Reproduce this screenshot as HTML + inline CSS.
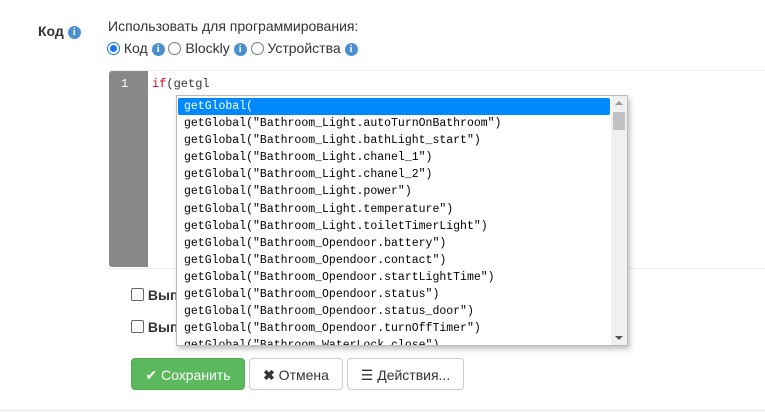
<!DOCTYPE html>
<html><head><meta charset="utf-8"><style>
body{margin:0;width:765px;height:413px;background:#fff;font-family:"Liberation Sans",sans-serif;font-size:14px;color:#333;position:relative;overflow:hidden}
.a{position:absolute}
.i{display:inline-block;width:13px;height:13px;border-radius:50%;background:#4a8fd0;color:#fff;font-size:10px;font-weight:bold;text-align:center;line-height:13px;font-family:"Liberation Serif",serif;vertical-align:1px}
.rad{display:inline-block;width:11px;height:11px;border:1px solid #777;border-radius:50%;vertical-align:-2px;background:#fff}
.mono{font-family:"Liberation Mono",monospace;font-size:11.5px}
.row{height:17.1px;line-height:17px;padding-left:6px;white-space:nowrap;color:#000}
.btn{position:absolute;top:358px;height:32px;border:1px solid #ccc;border-radius:4px;background:#fff;line-height:32px;text-align:center;font-size:14px;box-sizing:border-box}
.cb{display:inline-block;width:11px;height:11px;border:1px solid #666;border-radius:2px;vertical-align:-1px;background:#fff}
</style></head><body>
<div class="a" style="left:38px;top:23px;font-weight:bold">Код <span class="i">i</span></div>
<div class="a" style="left:108px;top:18px">Использовать для программирования:</div>
<div class="a" style="left:107px;top:40px;white-space:nowrap"><span class="rad" style="border-color:#1a73e8;background:radial-gradient(circle,#1a73e8 3px,#fff 4px)"></span> Код <span class="i">i</span> <span class="rad"></span> Blockly <span class="i">i</span> <span class="rad"></span> Устройства <span class="i">i</span></div>
<div class="a" style="left:108px;top:70px;width:660px;height:197px;border-top:1px solid #eee;border-bottom:1px solid #eee"></div>
<div class="a" style="left:109px;top:71px;width:39px;height:196px;background:#888;border-radius:3px 0 0 3px"></div>
<div class="a mono" style="left:121px;top:77px;color:#fff;font-size:12px">1</div>
<div class="a mono" style="left:152px;top:77px;font-size:12px"><span style="color:#e0002a">if</span>(getgl</div>
<div class="a" style="left:131px;top:287px;font-weight:bold"><span class="cb"></span> Вып</div>
<div class="a" style="left:131px;top:319px;font-weight:bold"><span class="cb"></span> Вып</div>
<div class="a" style="left:176px;top:95px;width:450px;height:249px;border:1px solid #bbb;background:#fff;box-shadow:2px 3px 5px rgba(0,0,0,.25);overflow:hidden">
<div class="a" style="right:0;top:0;width:16px;height:249px;background:#f0f0f0"></div>
<div class="a" style="right:2px;top:16px;width:12px;height:18px;background:#c1c1c1"></div>
<div class="a" style="right:4px;top:5px;width:0;height:0;border:4px solid transparent;border-bottom-color:#999;border-top:0"></div>
<div class="a" style="right:4px;bottom:5px;width:0;height:0;border:4px solid transparent;border-top-color:#555;border-bottom:0"></div>
<div class="mono" style="position:absolute;left:1px;top:2px;width:432px">
<div class="row" style="background:#0088ff;color:#fff;border-radius:2px">getGlobal(</div>
<div class="row">getGlobal("Bathroom_Light.autoTurnOnBathroom")</div>
<div class="row">getGlobal("Bathroom_Light.bathLight_start")</div>
<div class="row">getGlobal("Bathroom_Light.chanel_1")</div>
<div class="row">getGlobal("Bathroom_Light.chanel_2")</div>
<div class="row">getGlobal("Bathroom_Light.power")</div>
<div class="row">getGlobal("Bathroom_Light.temperature")</div>
<div class="row">getGlobal("Bathroom_Light.toiletTimerLight")</div>
<div class="row">getGlobal("Bathroom_Opendoor.battery")</div>
<div class="row">getGlobal("Bathroom_Opendoor.contact")</div>
<div class="row">getGlobal("Bathroom_Opendoor.startLightTime")</div>
<div class="row">getGlobal("Bathroom_Opendoor.status")</div>
<div class="row">getGlobal("Bathroom_Opendoor.status_door")</div>
<div class="row">getGlobal("Bathroom_Opendoor.turnOffTimer")</div>
<div class="row">getGlobal("Bathroom_WaterLock.close")</div>
</div></div>
<div class="btn" style="left:131px;width:114px;background:#5cb85c;border-color:#4cae4c;color:#fff">✔ Сохранить</div>
<div class="btn" style="left:249px;width:94px;color:#333"><b>✖</b> Отмена</div>
<div class="btn" style="left:347px;width:117px;color:#333">☰ Действия...</div>
<div class="a" style="left:0;top:410px;width:765px;height:1px;background:#e5e5e5"></div>
</body></html>
